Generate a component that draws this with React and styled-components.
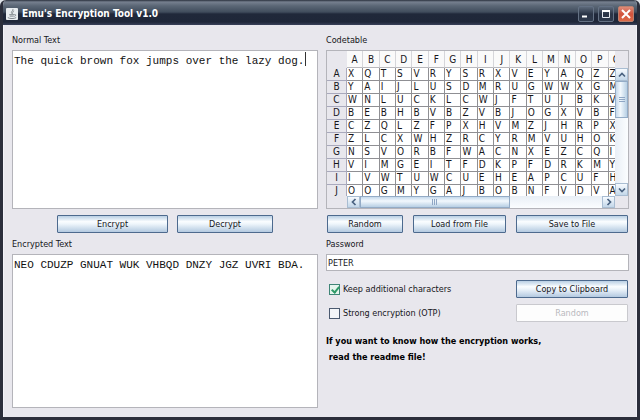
import { useState } from "react";
import styled, { createGlobalStyle } from "styled-components";

const COLUMNS = "ABCDEFGHIJKLMNOPQ".split("");

const CODE_ROWS = [
  ["A", "XQTSVRYSRXVEYAQZZ"],
  ["B", "YAIJLUSDMRUGWWXGM"],
  ["C", "WNLUCKLCWJFTUJBKV"],
  ["D", "BEBHBVBZVBJOGXVBF"],
  ["E", "CZQLZFPXHVMZJHRPX"],
  ["F", "ZLCXWHZRCYRMVUHOK"],
  ["G", "NSVORBFWACNXEZCQI"],
  ["H", "VIMGEITFDKPFDRKMY"],
  ["I", "IVWTUWCUEHEAPCUFH"],
  ["J", "OOGMYGAJBOBNFVDVA"],
];

const CHEVRONS = {
  up: "M2 6.5 L5 3.5 L8 6.5",
  down: "M2 3.5 L5 6.5 L8 3.5",
  left: "M6.5 2 L3.5 5 L6.5 8",
  right: "M3.5 2 L6.5 5 L3.5 8",
};

const Arrow = ({ direction }) => (
  <ArrowButton type="button" aria-label={`Scroll ${direction}`}>
    <svg width="10" height="10" viewBox="0 0 10 10" fill="none">
      <path d={CHEVRONS[direction]} stroke="#4a6280" strokeWidth="1.7" />
    </svg>
  </ArrowButton>
);

const JavaIcon = () => (
  <svg width="12" height="12" viewBox="0 0 13 13" aria-hidden="true">
    <rect width="13" height="13" rx="1" fill="#e9edf0" />
    <path
      d="M7.5 1 C8.5 3 4.5 3.6 6.2 6.2 M8.8 3 C6.6 4 7.6 5 7 6.4"
      stroke="#7c8489"
      strokeWidth="0.9"
      fill="none"
    />
    <path
      d="M3.5 7.2 H8.8 M4 8.8 H8.4 M9 7 C11 6.6 11 8.6 9 9 M2 10.4 C4 11.8 9 11.8 11 10.4"
      stroke="#6d757b"
      strokeWidth="0.9"
      fill="none"
    />
  </svg>
);

const CodeTable = () => (
  <ScrollPane>
    <Viewport>
      <Table aria-labelledby="codetable-label">
        <thead>
          <tr>
            <CornerCell />
            {COLUMNS.map((letter) => (
              <ColumnHead key={letter} scope="col">
                {letter}
              </ColumnHead>
            ))}
          </tr>
        </thead>
        <tbody>
          {CODE_ROWS.map(([name, letters]) => (
            <tr key={name}>
              <RowHead scope="row">{name}</RowHead>
              {letters.split("").map((letter, index) => (
                <Cell key={index}>{letter}</Cell>
              ))}
            </tr>
          ))}
        </tbody>
      </Table>
    </Viewport>
    <VerticalBar>
      <Arrow direction="up" />
      <VerticalThumb>
        <svg width="6" height="6" viewBox="0 0 6 6">
          <path d="M0 0.5H6M0 2.5H6M0 4.5H6" stroke="#8fa6c4" />
        </svg>
      </VerticalThumb>
      <Spacer />
      <Arrow direction="down" />
    </VerticalBar>
    <HorizontalBar>
      <Arrow direction="left" />
      <HorizontalThumb>
        <svg width="6" height="6" viewBox="0 0 6 6">
          <path d="M0.5 0V6M2.5 0V6M4.5 0V6" stroke="#8fa6c4" />
        </svg>
      </HorizontalThumb>
      <Spacer />
      <Arrow direction="right" />
    </HorizontalBar>
  </ScrollPane>
);

const App = () => {
  const [plain, setPlain] = useState(
    "The quick brown fox jumps over the lazy dog."
  );
  const [cipher, setCipher] = useState(
    "NEO CDUZP GNUAT WUK VHBQD DNZY JGZ UVRI BDA."
  );
  const [password, setPassword] = useState("PETER");
  const [keep, setKeep] = useState(true);
  const [strong, setStrong] = useState(false);

  return (
    <Window>
      <GlobalStyle />
      <TitleBar>
        <JavaIcon />
        <WindowTitle>Emu's Encryption Tool v1.0</WindowTitle>
        <WindowButton type="button" aria-label="Minimize">
          <svg width="14" height="14" viewBox="0 0 14 14">
            <path d="M3 9.5H8" stroke="#fff" strokeWidth="2" />
          </svg>
        </WindowButton>
        <WindowButton type="button" aria-label="Maximize">
          <svg width="14" height="14" viewBox="0 0 14 14" fill="none">
            <path d="M3.5 4V10.5H10.5V4" stroke="#e6eaf0" />
            <path d="M3 4H11" stroke="#fff" strokeWidth="2" />
          </svg>
        </WindowButton>
        <WindowButton type="button" aria-label="Close" $close>
          <svg width="14" height="14" viewBox="0 0 14 14">
            <path d="M3 3L11 11M11 3L3 11" stroke="#fff" strokeWidth="2" />
          </svg>
        </WindowButton>
      </TitleBar>

      <Content>
        <Column>
          <Label htmlFor="plain">Normal Text</Label>
          <TextBox>
            <TextArea
              id="plain"
              spellCheck={false}
              value={plain}
              onChange={(e) => setPlain(e.target.value)}
            />
            <Caret style={{ left: `calc(3px + ${plain.length}ch)` }} />
          </TextBox>
          <EncryptRow>
            <Button type="button">Encrypt</Button>
            <Button type="button">Decrypt</Button>
          </EncryptRow>
          <Label htmlFor="cipher">Encrypted Text</Label>
          <TextBox $fill>
            <TextArea
              id="cipher"
              spellCheck={false}
              value={cipher}
              onChange={(e) => setCipher(e.target.value)}
            />
          </TextBox>
        </Column>

        <Column>
          <Label as="span" id="codetable-label">
            Codetable
          </Label>
          <CodeTable />
          <TableActions>
            <Button type="button">Random</Button>
            <Button type="button">Load from File</Button>
            <Button type="button">Save to File</Button>
          </TableActions>
          <Label htmlFor="password">Password</Label>
          <PasswordInput
            id="password"
            value={password}
            onChange={(e) => setPassword(e.target.value)}
          />
          <Options>
            <CheckLabel>
              <Checkbox
                type="checkbox"
                checked={keep}
                onChange={(e) => setKeep(e.target.checked)}
              />
              Keep additional characters
            </CheckLabel>
            <Button type="button">Copy to Clipboard</Button>
            <CheckLabel>
              <Checkbox
                type="checkbox"
                checked={strong}
                onChange={(e) => setStrong(e.target.checked)}
              />
              Strong encryption (OTP)
            </CheckLabel>
            <Button type="button" disabled={!strong}>
              Random
            </Button>
          </Options>
          <Note>
            If you want to know how the encryption works,
            <br />
            &nbsp;read the readme file!
          </Note>
        </Column>
      </Content>
    </Window>
  );
};

const GlobalStyle = createGlobalStyle`
  * {
    box-sizing: border-box;
  }

  body {
    margin: 0;
    background: #dfe3e8;
  }

  body, button, input {
    font-family: "DejaVu Sans Condensed", "DejaVu Sans", sans-serif;
    font-size: 9px;
    color: #16161a;
  }

  svg {
    display: block;
    flex: none;
  }
`;

const Window = styled.div`
  display: flex;
  flex-direction: column;
  min-height: 100vh;
  border: 3px solid #2b2e3b;
  border-top: 0;
  border-radius: 6px 6px 0 0;
  overflow: hidden;
`;

const TitleBar = styled.header`
  display: flex;
  align-items: center;
  gap: 4px;
  height: 25px;
  padding: 2px 3px 0;
  background: linear-gradient(
    #2a313d 0,
    #76808f 2px,
    #5a6675 6px,
    #414d5d 12px,
    #20283a 14px,
    #1f2739 22px,
    #39415a 25px
  );
`;

const WindowTitle = styled.h1`
  flex: 1;
  margin: 0;
  font-size: 10px;
  font-weight: bold;
  color: #fff;
`;

const WindowButton = styled.button`
  display: grid;
  place-items: center;
  width: 16px;
  height: 16px;
  padding: 0;
  border: 1px solid ${({ $close }) => ($close ? "#b9806f" : "#647184")};
  border-radius: 2px;
  background: ${({ $close }) =>
    $close
      ? "linear-gradient(#dd8b78, #d2523c 50%, #dc6a48)"
      : "linear-gradient(#5c697a, #2a3446 50%, #2f3a4d)"};
`;

const Content = styled.main`
  flex: 1;
  display: grid;
  grid-template-columns: 306fr 303fr;
  gap: 8px;
  padding: 8px 7px 9px 8px;
  border: 1px solid #f2f2f8;
  border-width: 0 1px;
  background: #e8e7ed;
`;

const Column = styled.div`
  display: flex;
  flex-direction: column;
  min-width: 0;
`;

const Label = styled.label`
  height: 17px;
  line-height: 14px;
`;

const TextBox = styled.div`
  position: relative;
  display: flex;
  flex: ${({ $fill }) => ($fill ? "1" : "0 0 159px")};
  font: 11px "Liberation Mono", monospace;
`;

const TextArea = styled.textarea`
  flex: 1;
  min-width: 0;
  padding: 3px 1px;
  border: 1px solid #b4b4ba;
  outline: 0;
  resize: none;
  background: #fff;
  font: inherit;
  line-height: 14px;
  color: #111;
`;

const Caret = styled.span`
  position: absolute;
  top: 2px;
  width: 1px;
  height: 14px;
  background: #333;
`;

const Button = styled.button`
  height: 18px;
  padding: 0;
  border: 1px solid #4d6a8e;
  border-radius: 1px;
  background: linear-gradient(#b9cfe4, #fafdff 35%, #eef5fb 50%, #b3c9e0);
  white-space: nowrap;

  &:disabled {
    border-color: #c9c9ce;
    background: #fdfdfd;
    color: #b9b9bd;
  }
`;

const EncryptRow = styled.div`
  display: grid;
  grid-template-columns: 111fr 96fr;
  gap: 9px;
  padding: 6px 45px 4px;
`;

const TableActions = styled.div`
  display: grid;
  grid-template-columns: 76fr 93fr 112fr;
  gap: 10px;
  padding: 6px 1px 4px;
`;

const ScrollPane = styled.div`
  display: grid;
  grid-template-columns: 20px 1fr 13px;
  grid-template-rows: 145px 12px;
  border: 1px solid #b4b4ba;
`;

const Viewport = styled.div`
  grid-column: 1 / 3;
  overflow: hidden;
`;

const Table = styled.table`
  table-layout: fixed;
  width: calc(100% + 10px);
  border-collapse: separate;
  border-spacing: 0;
  font-size: 10px;
`;

const CornerCell = styled.td`
  width: 20px;
  padding: 0;
`;

const ColumnHead = styled.th`
  height: 17px;
  padding: 0;
  border-right: 1px solid #d6d6da;
  border-bottom: 1px solid #b9b9bd;
  background: #fafafa;
  font-weight: normal;
`;

const RowHead = styled.th`
  height: 13px;
  padding: 0;
  border: 1px solid #a9a9bd;
  border-width: 0 1px 1px 0;
  font-weight: normal;
  line-height: 12px;
`;

const Cell = styled.td`
  height: 13px;
  padding: 0 0 0 1px;
  border: 1px solid #8f8f93;
  border-width: 0 1px 1px 0;
  background: #fff;
  line-height: 12px;
`;

const VerticalBar = styled.div`
  display: flex;
  flex-direction: column;
  margin-top: 17px;
  background: linear-gradient(90deg, #e9eff6, #fbfdff);
`;

const HorizontalBar = styled.div`
  grid-column: 2;
  display: flex;
  background: linear-gradient(#e9eff6, #fbfdff);
`;

const ArrowButton = styled.button`
  display: grid;
  place-items: center;
  flex: 0 0 13px;
  padding: 0;
  border: 1px solid #a9bdd2;
  background: linear-gradient(#f7fbff, #c3d7e9);
`;

const VerticalThumb = styled.div`
  display: grid;
  place-items: center;
  flex: 0 0 37px;
  border: 1px solid #93abc6;
  background: linear-gradient(90deg, #c5d9ec, #f2f8fd 40%, #b7cfe4);
`;

const HorizontalThumb = styled.div`
  display: grid;
  place-items: center;
  flex: 0 0 56%;
  border: 1px solid #93abc6;
  background: linear-gradient(#c5d9ec, #f2f8fd 40%, #b7cfe4);
`;

const Spacer = styled.div`
  flex: 1;
`;

const PasswordInput = styled.input`
  height: 17px;
  padding: 0 1px;
  border: 1px solid #b4b4ba;
  outline: 0;
  background: #fff;
`;

const Options = styled.div`
  display: grid;
  grid-template-columns: 1fr 112px;
  gap: 6px;
  align-items: center;
  padding: 9px 1px 0 3px;
`;

const CheckLabel = styled.label`
  display: flex;
  align-items: center;
  gap: 3px;
`;

const Checkbox = styled.input`
  appearance: none;
  width: 11px;
  height: 11px;
  margin: 0;
  border: 1px solid #4b5a70;
  background: #f4f6f9;

  &:checked {
    border-color: #3f8577;
    background: #e6f5ee;
  }

  &:checked::after {
    content: "";
    display: block;
    width: 3px;
    height: 6px;
    margin: 0 0 0 3px;
    border: solid #2f9a68;
    border-width: 0 2px 2px 0;
    transform: rotate(40deg);
  }
`;

const Note = styled.p`
  margin: 11px 0 0;
  font-weight: bold;
  line-height: 16px;
  color: #000;
`;

export default App;
